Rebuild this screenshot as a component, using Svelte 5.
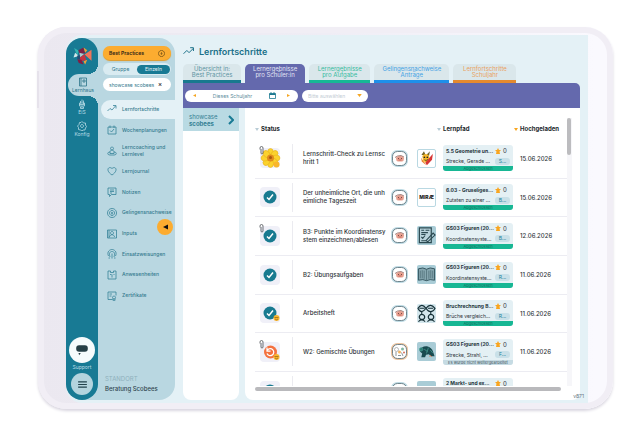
<script>
  let view = 'Einzeln';
  let activeTab = 1;

  const menu = [
    { label: 'Lernfortschritte', icon: 'M1 14 6 9l4 3 7-8M12 3h6v6' },
    { label: 'Wochenplanungen', icon: 'M2 4h16v14H2zM6 1v5M14 1v5M6 11l3 3 5-6' },
    { label: 'Lerncoaching und Lernlevel', icon: 'M10 2a3 3 0 1 0 .1 0M6 12c0-5 8-5 8 0v3H6zM6 12c-6 0-6 6 0 6h8c6 0 6-6 0-6' },
    { label: 'Lernjournal', icon: 'M10 18C-4 9 3-1 10 5c7-6 14 4 0 13z' },
    { label: 'Notizen', icon: 'M2 2h16v13H9l-4 4v-4H2zM6 6h8M6 9h8M6 12h4' },
    { label: 'Gelingensnachweise', icon: 'M10 1a9 9 0 1 0 .1 0M10 5a5 5 0 1 0 .1 0M10 8v5M8 10h4' },
    { label: 'Inputs', icon: 'M1 2h18v16H1zM10 5a3 3 0 1 0 .1 0M5 16c0-6 10-6 10 0M4 2v16' },
    { label: 'Einsatzweisungen', icon: 'M3 14C-1 5 6 1 10 1s11 4 7 13M6 16C3 7 7 5 10 5s7 2 4 11M10 9v10M3 18h3M14 18h3' },
    { label: 'Anwesenheiten', icon: 'M2 2h5v3h6V2h5v16H2zM6 9h3M10 9v6M13 9h2' },
    { label: 'Zertifikate', icon: 'M11 17H2V2h16v7M5 6h5M5 10h4M14 10a3 3 0 1 0 .1 0M12 15v4l2-1 2 1v-4' },
  ];

  const tabs = [
    { top: 'Übersicht in:', bottom: 'Best Practices', kind: 'teal' },
    { top: 'Lernergebnisse', bottom: 'pro Schüler:in', kind: 'purple' },
    { top: 'Lernergebnisse', bottom: 'pro Aufgabe', kind: 'green' },
    { top: 'Gelingensnachweise', bottom: 'Anträge', kind: 'blue' },
    { top: 'Lernfortschritte', bottom: 'Schuljahr', kind: 'orange' },
  ];

  const rows = [
    { status: 'flower', clip: true, lines: ['Lernschritt-Check zu Lernsc', 'hritt 1'], tile: 'bee', path: '5.5 Geometrie un...', sub: 'Strecke, Gerade ...', tag: 'S...', date: '15.06.2026' },
    { status: 'check', lines: ['Der unheimliche Ort, die unh', 'eimliche Tageszeit'], tile: 'word', path: '6.03 - Gruseliges...', sub: 'Zutaten zu einer ...', tag: 'B...', date: '15.06.2026' },
    { status: 'check', clip: true, lines: ['B3: Punkte im Koordinatensy', 'stem einzeichnen/ablesen'], tile: 'note', path: 'GS03 Figuren (20...', sub: 'Koordinatensyste...', tag: 'B...', date: '12.06.2026' },
    { status: 'check', lines: ['B2: Übungsaufgaben'], tile: 'book', path: 'GS03 Figuren (20...', sub: 'Koordinatensyste...', tag: 'R...', date: '11.06.2026' },
    { status: 'check', smile: true, lines: ['Arbeitsheft'], tile: 'people', path: 'Bruchrechnung B...', sub: 'Brüche vergleich...', tag: 'R...', date: '11.06.2026' },
    { status: 'redo', clip: true, smile: true, lines: ['W2: Gemischte Übungen'], tile: 'turtle', team: true, stopped: true, path: 'GS03 Figuren (20...', sub: 'Strecke, Strahl, ...', tag: 'F...', date: '11.06.2026' },
    { status: 'check', lines: [''], tile: 'plain', path: '2 Markt- und ex...', date: '' },
  ];
</script>

<div class="page">
  <div class="tablet">
    <div class="screen">
      <aside class="sidebar">
        <nav class="rail">
          <svg class="logo" viewBox="0 0 36 36">
            <path fill="#35b5b4" d="M2 4l9 5-3 9z" />
            <path fill="#d4e8ea" d="M1 22l3-9 7 6z" />
            <path fill="#7a2148" d="M10 8l10-5 3 10-10 4z" />
            <path fill="#e6a536" d="M20 3l7 5-4 5z" />
            <path fill="#214d76" d="M8 18l5-1 3 9-8-2z" />
            <path fill="#a9cdd0" d="M12 13l9 2-7 7z" />
            <path fill="#c63342" d="M13 22l9-7 3 12-11 2z" />
            <path fill="#f0745a" d="M22 16l13-9v21z" />
            <path fill="#821c43" d="M8 25l8 1 4 9-9-3z" />
            <path fill="#eea037" d="M20 29l7-3-4 9z" />
          </svg>
          <a class="rail-item active" href="#home">
            <svg viewBox="0 0 20 20"><path d="M3 2h14v16H3zM6 2v16M10 6h4v4h-4z" /></svg>
            <span>Lernhaus</span>
          </a>
          <a class="rail-item" href="#ki">
            <svg viewBox="0 0 20 20"><path d="M10 1v6M7 4v5M13 3v7M5 8h10v6H5zM5 11h10M7 16h6v3H7z" /></svg>
            <span>EiS</span>
          </a>
          <a class="rail-item" href="#config">
            <svg viewBox="0 0 20 20"><path d="M10 1l3 3 4 0 0 4 2 3-2 3-1 4-4 0-2 2-3-2-4-1 0-4-2-3 3-3 1-4 3 0zM10 7a3 3 0 1 0 .1 0" /></svg>
            <span>Konfig</span>
          </a>
          <div class="rail-bottom">
            <button class="support" aria-label="Chat">
              <svg viewBox="0 0 24 24"><path fill="#263f46" d="M7 4h10q5 0 5 5.500t-5 5.500H7q-5 0-5-5.500T7 4zM6 17h4l-3 4z" /></svg>
            </button>
            <span>Support</span>
            <button class="burger" aria-label="Menü">
              <svg viewBox="0 0 10 8"><path stroke="#21424c" stroke-width="1.2" d="M0 1h10M0 4h10M0 7h10" /></svg>
            </button>
          </div>
        </nav>

        <div class="panel">
          <button class="school">
            Best Practices
            <svg viewBox="0 0 16 16"><path d="M8 1a7 7 0 1 0 .1 0M8 5v5M6 8l2 2 2-2" /></svg>
          </button>
          <div class="toggle">
            {#each ['Gruppe', 'Einzeln'] as name}
              <button class:on={view === name} on:click={() => (view = name)}>{name}</button>
            {/each}
          </div>
          <button class="person">showcase scobees <b>×</b></button>

          <nav class="menu">
            {#each menu as item, i}
              <a href="#menu" class:active={i === 0}>
                <svg viewBox="0 0 20 20"><path d={item.icon} /></svg>
                <span>{item.label}</span>
              </a>
            {/each}
          </nav>

          <footer>
            <span>STANDORT</span>
            <strong>Beratung Scobees</strong>
          </footer>
        </div>
        <button class="collapse" aria-label="Einklappen">
          <svg viewBox="0 0 6 6"><path fill="#111" d="M0 3l6-3v6z" /></svg>
        </button>
      </aside>

      <main>
        <h1>
          <svg viewBox="0 0 20 14"><path d="M1 12 7 6l4 4 8-8M13 1h6v6" /></svg>
          Lernfortschritte
        </h1>

        <div class="tabs">
          {#each tabs as tab, i}
            <button class="tab {tab.kind}" class:selected={i === activeTab} on:click={() => (activeTab = i)}>
              {tab.top}<br />{tab.bottom}
            </button>
          {/each}
        </div>

        <div class="filters">
          <div class="pill period">
            <button aria-label="Zurück"><svg viewBox="0 0 4 4"><path fill="#f5a623" d="M0 2l4-2v4z" /></svg></button>
            <span>Dieses Schuljahr</span>
            <svg class="calendar" viewBox="0 0 14 14"><path fill="none" stroke="#1b7890" stroke-width="1.6" d="M1 3h12v10H1zM4 0v4M10 0v4" /><path fill="#1b7890" d="M1 3h12v3H1z" /></svg>
            <button aria-label="Weiter"><svg viewBox="0 0 4 4"><path fill="#f5a623" d="M4 2L0 0v4z" /></svg></button>
          </div>
          <div class="pill choose">
            <select aria-label="Auswahl"><option>Bitte auswählen</option></select>
            <svg viewBox="0 0 6 4"><path fill="#f5a623" d="M0 0h6L3 4z" /></svg>
          </div>
        </div>

        <div class="content">
          <section class="people">
            <button class="pupil">
              <span>showcase<br /><b>scobees</b></span>
              <svg viewBox="0 0 6 10"><path d="M1 1l4 4-4 4" /></svg>
            </button>
          </section>

          <section class="results">
            <div class="scroller">
              <table>
                <thead>
                  <tr>
                    <th class="c-status"><i class="sort"></i>Status</th>
                    <th class="c-text"></th>
                    <th class="c-icon"></th>
                    <th class="c-icon"></th>
                    <th class="c-path"><i class="sort out"></i>Lernpfad</th>
                    <th><i class="sort out on"></i>Hochgeladen</th>
                  </tr>
                </thead>
                <tbody>
                  {#each rows as row}
                    <tr>
                      <td class="status">
                        <div class="badge">
                          <svg viewBox="0 0 40 40">
                            {#if row.status === 'flower'}
                              {#each [0, 45, 90, 135, 180, 225, 270, 315] as turn}
                                <ellipse cx="21" cy="9" rx="6" ry="8" fill="#fbd22d" stroke="#e2aa18" transform="rotate({turn} 21 20)" />
                              {/each}
                              <circle cx="21" cy="20" r="7" fill="#e08a1c" />
                              <circle cx="21" cy="19" r="3" fill="#a8580f" />
                              <circle cx="33" cy="33" r="6" fill="#f9b62c" />
                            {:else if row.status === 'check'}
                              <circle cx="20" cy="20" r="13" fill="#187a90" />
                              <path d="M14 21l4 4 8-10" fill="none" stroke="#fff" stroke-width="3" />
                            {:else}
                              <circle cx="21" cy="20" r="13" fill="#f4713f" />
                              <path d="M15 16a7 7 0 1 1-1 7M14 11v7h7" fill="none" stroke="#fff" stroke-width="2.5" />
                            {/if}
                            {#if row.smile}
                              <circle cx="33" cy="30" r="6" fill="#f8b62e" />
                              <path d="M29 29h8M30 32q3 3 6 0" fill="none" stroke="#8a5a12" stroke-width="1.3" />
                            {/if}
                            {#if row.clip}
                              <path d="M1 6V3q0-3 3-3t3 3v10q0 2-2 2t-2-2V5" fill="none" stroke="#4c5056" stroke-width="1.6" transform="translate(-1 -3)" />
                            {/if}
                          </svg>
                        </div>
                      </td>
                      <td class="text">{row.lines[0]}{#if row.lines[1]}<br />{row.lines[1]}{/if}</td>
                      <td>
                        <svg class="avatar" viewBox="0 0 34 34">
                          <rect x="1.5" y="1.5" width="31" height="31" rx="11" fill="#fff" stroke={row.team ? '#ecc4a0' : '#bfdbe4'} stroke-width="3" />
                          <rect x="3" y="3" width="28" height="28" rx="10" fill="none" stroke="#5c727c" stroke-width="1.7" />
                          {#if row.team}
                            <circle cx="11" cy="13" r="4" fill="none" stroke="#777" />
                            <circle cx="23" cy="12" r="3" fill="#84b7a4" />
                            <circle cx="17" cy="18" r="3" fill="#efb261" />
                            <path d="M10 18v8M21 19l3 7M14 25h6" stroke="#697379" fill="none" stroke-width="1.5" />
                            <circle cx="26" cy="19" r="2" fill="#d76f59" />
                          {:else}
                            <path d="M10 17q0-5 8-5t8 5-4 6h-8q-4-1-4-6z" fill="#e8a090" />
                            <path d="M8 15l5-3 7-1 6 3" stroke="#8a5f58" stroke-width="1.5" fill="none" />
                            <circle cx="15" cy="17" r="1" fill="#54322e" /><circle cx="21" cy="17" r="1" fill="#54322e" />
                            <path d="M15 20h6" stroke="#c4685c" stroke-width="2" />
                          {/if}
                        </svg>
                      </td>
                      <td>
                        <div class="tile {row.tile}">
                          {#if row.tile === 'word'}
                            MIRÆ
                          {:else}
                            <svg viewBox="0 0 40 40">
                              {#if row.tile === 'bee'}
                                <path d="M8 12L14 3l4 9zM20 11l8-8-2 11z" fill="#73652b" />
                                <path d="M10 14q8-9 16 0l2 9q-8 12-16 1z" fill="#f6b727" />
                                <path d="M27 18l8-9-2 14-12 13-4-6z" fill="#d63636" />
                                <path d="M7 18l9 12 3 6-10-9z" fill="#e98731" />
                                <circle cx="15" cy="17" r="2" fill="#222" /><circle cx="22" cy="17" r="2" fill="#222" />
                                <path d="M15 23q4 4 8-1" fill="none" stroke="#442" stroke-width="2" />
                              {:else if row.tile === 'note'}
                                <path d="M5 4h25v31H5z" fill="#b9d4dc" stroke="#2a4850" stroke-width="2.5" />
                                <path d="M9 9h6M18 9h8M9 14h14M9 18h9M9 23l3 3 5-6M9 31h10M19 31L34 15l4 4-15 14z" fill="none" stroke="#2a4850" stroke-width="2.3" />
                              {:else if row.tile === 'book'}
                                <path d="M3 8q10-4 17 1 7-5 17-1v24q-10-3-17 1-7-4-17-1z" fill="#86a7b0" stroke="#31525c" stroke-width="2" />
                                <path d="M20 9v24M7 12v16M11 11v17M15 12v17M25 12v17M29 11v17M33 12v16" stroke="#46656e" stroke-width="1.4" />
                              {:else if row.tile === 'people'}
                                <path d="M2 9q8-12 17 0 9-12 19 0-3 7-10 7-5 0-9-7-5 7-9 7-5 0-8-7zM5 9h11M23 9h11M10 16v7M29 16v7M6 24q4-4 9 0 3 4-1 8H7q-4-4-1-8zM25 24q4-4 9 0 3 4-1 8h-7q-4-4-1-8zM3 37q7-7 14 0M22 37q7-7 15 0" fill="none" stroke="#152f36" stroke-width="2.4" />
                              {:else if row.tile === 'turtle'}
                                <path d="M6 20Q9 8 21 9q10 2 13 12l3 9h-8l-4-4-6 1-2 5H9l2-8z" fill="#184b50" />
                                <path d="M5 14q5-5 7 0t-6 5zM15 15l7 5M24 12l-4 12M28 17l5 6" fill="#2d7d75" stroke="#4aa197" stroke-width="1.5" />
                                <path d="M26 30q3-3 5 1" stroke="#e8794b" stroke-width="2" fill="none" />
                              {/if}
                            </svg>
                          {/if}
                        </div>
                      </td>
                      <td>
                        <div class="card" class:stopped={row.stopped}>
                          <strong>{row.path}</strong>
                          <span class="stars"><svg viewBox="0 0 12 12"><path fill="#f9a51f" d="M6 0l2 4 4 0-3 3 1 5H2l1-5-3-3h4z" /></svg>0</span>
                          {#if row.sub}
                            <span class="sub">{row.sub}</span>
                            <span class="tag">{row.tag}</span>
                            <em>{row.stopped ? 'Es wurde nicht weitergearbeitet' : 'Abgeschlossen'}</em>
                          {/if}
                        </div>
                      </td>
                      <td class="date">{row.date}</td>
                    </tr>
                  {/each}
                </tbody>
              </table>
            </div>
            <div class="vbar"><i></i></div>
            <div class="hbar"></div>
          </section>
        </div>
      </main>
      <small class="version">v871</small>
    </div>
  </div>
</div>

<style>
  :global(body) {
    background: #fff;
    font-family: Inter, 'Liberation Sans', sans-serif;
    font-size: 6px;
    color: #2d3338;
  }
  .page, .page * {
    box-sizing: border-box;
  }
  button, select {
    font: inherit;
    color: inherit;
    border: 0;
    padding: 0;
    background: none;
    cursor: pointer;
  }
  a {
    text-decoration: none;
    color: inherit;
  }
  svg {
    display: block;
    flex: none;
  }
  .page {
    height: 100vh;
    padding: 27px 27px 28px 38px;
  }
  .tablet {
    position: relative;
    height: 100%;
    padding: 8px 25px 6px 28px;
    border-radius: 28px;
    background: linear-gradient(90deg, #ebe8f0, #efedf5 50%, #faf9fe 97%);
    box-shadow: inset 0 0 0 6px #f1eef5, 0 2px 3px #d9d6e0;
  }
  .tablet::before {
    content: '';
    position: absolute;
    left: -1px;
    top: 44px;
    width: 2px;
    height: 37px;
    background: #e6e2eb;
  }
  .screen {
    position: relative;
    display: flex;
    gap: 8px;
    height: 100%;
    padding: 3px 8px 3px 0;
    background: #e4f1f6;
    border-radius: 16px 0 0 16px;
  }

  /* sidebar */
  .sidebar {
    position: relative;
    display: flex;
    flex: none;
    width: 109px;
    border-radius: 16px;
    background: #b9d7e1;
  }
  .rail {
    display: flex;
    flex-direction: column;
    align-items: center;
    width: 32px;
    padding: 8px 0 5px;
    border-radius: 16px;
    background: #187a94;
    color: #b9dce6;
    font-size: 5px;
  }
  .logo {
    width: 19px;
    height: 19px;
    margin-bottom: 9px;
  }
  .rail-item {
    display: flex;
    flex-direction: column;
    align-items: center;
    justify-content: center;
    width: 100%;
    height: 22px;
    line-height: 6px;
  }
  .rail-item svg {
    width: 10px;
    height: 10px;
    fill: none;
    stroke: currentColor;
    stroke-width: 1.6;
  }
  .rail-item.active {
    position: relative;
    align-self: flex-end;
    width: 30px;
    height: 22px;
    border-radius: 12px 0 0 12px;
    background: #b9d7e1;
    color: #2b7389;
  }
  .rail-item.active::before,
  .rail-item.active::after {
    content: '';
    position: absolute;
    right: 0;
    width: 10px;
    height: 10px;
  }
  .rail-item.active::before {
    top: -10px;
    background: radial-gradient(circle at 0 0, transparent 10px, #b9d7e1 10px);
  }
  .rail-item.active::after {
    bottom: -10px;
    background: radial-gradient(circle at 0 100%, transparent 10px, #b9d7e1 10px);
  }
  .rail-bottom {
    display: flex;
    flex-direction: column;
    align-items: center;
    margin-top: auto;
    line-height: 8px;
  }
  .support {
    display: grid;
    place-items: center;
    width: 26px;
    height: 26px;
    border-radius: 50%;
    background: #f6fbfc;
  }
  .support svg {
    width: 14px;
    height: 14px;
  }
  .burger {
    display: grid;
    place-items: center;
    width: 22px;
    height: 22px;
    margin-top: 2px;
    border-radius: 50%;
    background: #b4d4de;
  }
  .burger svg {
    width: 9px;
    height: 7px;
  }
  .panel {
    flex: 1;
    display: flex;
    flex-direction: column;
    padding: 8px 0 6px 3px;
    color: #34798e;
  }
  .school, .toggle, .person {
    display: flex;
    align-items: center;
    justify-content: space-between;
    margin: 0 4px 0 2px;
    border-radius: 7px;
    font-size: 5px;
  }
  .school {
    height: 14px;
    padding: 0 6px;
    background: #fcac30;
    color: #3b2d17;
    font-weight: 700;
    box-shadow: 0 1px 1px #e39a25;
  }
  .school svg {
    width: 7px;
    height: 7px;
    fill: none;
    stroke: #5d4213;
    stroke-width: 1.5;
  }
  .toggle {
    height: 12px;
    margin-top: 3px;
    padding: 1px;
    background: #d9ebf1;
  }
  .toggle button {
    flex: 1;
    height: 9px;
    border-radius: 5px;
  }
  .toggle .on {
    background: #187a94;
    color: #e9f6f9;
  }
  .person {
    height: 13px;
    margin-top: 3px;
    padding: 0 9px 0 6px;
    background: #fff;
  }
  .person b {
    color: #444;
    font-size: 6px;
  }
  .menu {
    display: grid;
    grid-auto-rows: 1fr;
    height: 207px;
    margin-top: 8px;
  }
  .menu a {
    display: flex;
    align-items: center;
    gap: 5px;
    padding-left: 6px;
    font-size: 5px;
    font-weight: 500;
    line-height: 7px;
  }
  .menu a span {
    max-width: 50px;
  }
  .menu svg {
    width: 10px;
    height: 10px;
    fill: none;
    stroke: #2f7e94;
    stroke-width: 1.5;
  }
  .menu .active {
    margin: 1px 0;
    border-radius: 10px 0 0 10px;
    background: #e4f1f6;
  }
  .panel footer {
    display: flex;
    flex-direction: column;
    margin-top: auto;
    padding-left: 4px;
    line-height: 10px;
    color: #8fb1bd;
  }
  .panel footer strong {
    color: #2f454e;
    font-weight: 500;
  }
  .collapse {
    position: absolute;
    top: 181px;
    right: 2px;
    display: grid;
    place-items: center;
    width: 16px;
    height: 16px;
    border-radius: 50%;
    background: #fcac30;
  }
  .collapse svg {
    width: 5px;
    height: 6px;
  }

  /* main area */
  main {
    flex: 1;
    min-width: 0;
    display: flex;
    flex-direction: column;
  }
  h1 {
    display: flex;
    align-items: center;
    gap: 5px;
    height: 26px;
    margin: 0;
    font-size: 9px;
    font-weight: 600;
    color: #1b7089;
  }
  h1 svg {
    width: 11px;
    height: 8px;
    fill: none;
    stroke: #1b7089;
    stroke-width: 1.8;
  }
  .tabs {
    display: grid;
    grid-template-columns: 58fr 60fr 61fr 75fr 63fr;
    gap: 4px;
    width: 84%;
  }
  .tab {
    height: 19px;
    border-radius: 5px 5px 0 0;
    border-bottom: 3px solid;
    background: #dae7eb;
    font-size: 6px;
    line-height: 6px;
    white-space: nowrap;
  }
  .tab.teal { color: #5e95a3; border-color: #18798f; }
  .tab.green { color: #35bba0; border-color: #16b795; }
  .tab.blue { color: #44a2e4; border-color: #1e90ea; }
  .tab.orange { color: #e9a162; border-color: #e58a2e; }
  .tab.selected { background: #6469ad; border-color: #6469ad; color: #e3e4f5; }
  .filters {
    display: flex;
    align-items: center;
    gap: 4px;
    height: 25px;
    padding: 0 2px;
    border-radius: 0 5px 0 0;
    background: #6469ad;
  }
  .pill {
    display: flex;
    align-items: center;
    height: 12px;
    border-radius: 6px;
    background: #fff;
  }
  .period {
    width: 113px;
    padding: 0 8px;
    font-size: 5px;
    color: #5c8c9c;
  }
  .period span {
    flex: 1;
    text-align: center;
  }
  .period button svg {
    width: 3px;
    height: 3px;
  }
  .calendar {
    width: 7px;
    height: 7px;
    margin-right: 11px;
  }
  .choose {
    width: 66px;
    padding: 0 6px;
  }
  .choose select {
    flex: 1;
    min-width: 0;
    appearance: none;
    font-size: 5px;
    color: #c3ccd4;
  }
  .choose svg {
    width: 5px;
    height: 3px;
  }
  .content {
    flex: 1;
    min-height: 0;
    display: flex;
    gap: 6px;
  }
  .people {
    flex: none;
    width: 56px;
    border-radius: 0 0 8px 8px;
    background: #fff;
  }
  .pupil {
    display: flex;
    align-items: center;
    justify-content: space-between;
    width: 100%;
    height: 23px;
    padding: 0 5px 0 6px;
    background: #b9dae3;
    color: #337f93;
    line-height: 7px;
    text-align: left;
  }
  .pupil svg {
    width: 6px;
    height: 10px;
    fill: none;
    stroke: #187a94;
    stroke-width: 2;
  }
  .results {
    flex: 1;
    min-width: 0;
    display: grid;
    grid-template-columns: 1fr 5px;
    grid-template-rows: 1fr 5px;
    padding: 10px 8px 9px 10px;
    border-radius: 0 0 8px 8px;
    background: #fff;
  }
  .scroller {
    min-height: 0;
    overflow: hidden;
  }
  table {
    width: 100%;
    table-layout: fixed;
    border-collapse: collapse;
  }
  th {
    height: 21px;
    padding: 0;
    text-align: left;
    font-size: 6px;
    font-weight: 700;
    color: #22272b;
    white-space: nowrap;
  }
  .c-status { width: 38px; }
  .c-text { width: 98px; }
  .c-icon { width: 26px; }
  .c-path { width: 77px; }
  .sort {
    display: inline-block;
    margin-right: 2px;
    border: 2px solid transparent;
    border-top: 3px solid #b9ccd6;
    border-bottom: 0;
  }
  .sort.out {
    margin-left: -6px;
  }
  .sort.on {
    border-top-color: #f9a51f;
  }
  td {
    height: 39px;
    padding: 0;
    border-bottom: 1px solid #ececf2;
    vertical-align: middle;
  }
  tr:nth-child(3n + 2) td {
    height: 38px;
  }
  .status {
    padding-left: 5px;
    background: linear-gradient(#ebebf0, #ebebf0) right / 1px 29px no-repeat;
  }
  .badge {
    width: 20px;
    height: 20px;
    border-radius: 4px;
    background: #f0f0f8;
  }
  .badge svg {
    width: 20px;
    height: 20px;
    overflow: visible;
  }
  .text {
    padding-left: 10px;
    font-weight: 500;
    line-height: 8px;
    white-space: nowrap;
  }
  .avatar {
    width: 17px;
    height: 17px;
  }
  .tile {
    display: grid;
    place-items: center;
    width: 19px;
    height: 19px;
    border-radius: 2px;
    background: #a9ccd6;
    font-size: 5px;
    font-weight: 800;
    color: #222;
  }
  .tile.word, .tile.bee {
    background: #fff;
    border: 1px solid #b9d8e2;
  }
  .tile.people {
    background: #d3e6ec;
  }
  .tile svg {
    width: 100%;
    height: 100%;
  }
  .card {
    display: grid;
    grid-template-columns: 1fr 18px;
    grid-template-rows: 11px 10px 5px;
    align-items: center;
    width: 70px;
    border-radius: 3px;
    overflow: hidden;
    background: #e4f0f4;
    font-size: 5px;
    white-space: nowrap;
  }
  .card strong, .card .sub {
    padding-left: 3px;
    overflow: hidden;
  }
  .card strong {
    color: #23343c;
  }
  .stars {
    display: flex;
    align-items: center;
    gap: 2px;
    font-size: 6px;
  }
  .stars svg {
    width: 6px;
    height: 6px;
  }
  .tag {
    width: 15px;
    height: 7px;
    border-radius: 3px;
    background: #c9e0e8;
    color: #23809a;
    line-height: 7px;
    text-align: center;
  }
  .card em {
    grid-column: 1 / 3;
    height: 5px;
    background: #17b794;
    color: #0d6e5b;
    font-size: 4px;
    font-style: normal;
    line-height: 5px;
    text-align: center;
  }
  .card.stopped em {
    background: #c6dbe3;
    color: #3c535d;
  }
  .date {
    font-weight: 500;
    white-space: nowrap;
  }
  .vbar {
    background: #f6f6f9;
  }
  .vbar i {
    display: block;
    height: 37px;
    margin-right: 1px;
    border-radius: 2px;
    background: #bcbcbf;
  }
  .hbar {
    height: 4px;
    margin: 1px 6px 0 0;
    border-radius: 2px;
    background: #b9b9bc;
  }
  .version {
    position: absolute;
    right: 4px;
    bottom: 4px;
    font-size: 5px;
    color: #66757d;
  }
</style>
